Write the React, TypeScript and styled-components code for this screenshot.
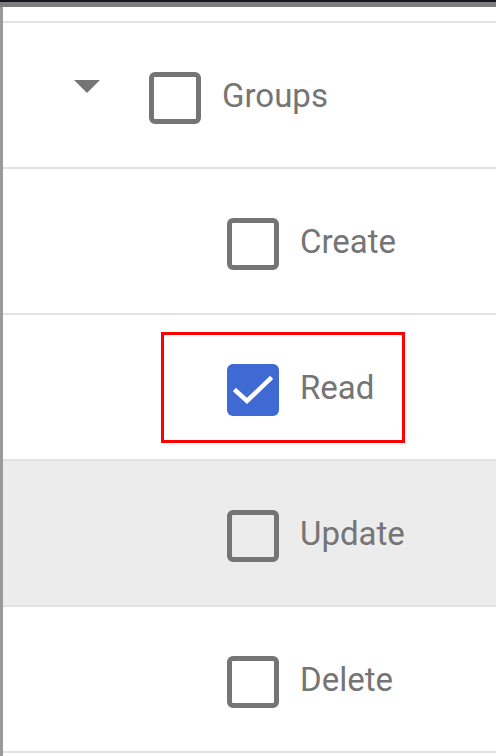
import React from "react";
import styled, { createGlobalStyle } from "styled-components";

const Global = createGlobalStyle`
  html, body { margin: 0; padding: 0; background: #ffffff; }
  body { font-family: Roboto, "Noto Sans", Arial, sans-serif; }
`;

const Frame = styled.div`
  width: 496px;
  height: 756px;
  box-sizing: border-box;
  border-top: 2px solid #15151f;
  overflow: hidden;
  background: #ffffff;
`;

const TopBand = styled.div`
  height: 5px;
  background: #7d7d7d;
`;

const Body = styled.div`
  border-left: 3px solid #9a9a9a;
  height: 100%;
  box-sizing: border-box;
  padding-top: 14px;
`;

const List = styled.div`
  border-top: 2px solid #e2e2e2;
  display: flex;
  flex-direction: column;
`;

const Row = styled.div<{ $indent: number; $shaded?: boolean }>`
  position: relative;
  height: 144px;
  border-bottom: 2px solid #e2e2e2;
  background: ${(p) => (p.$shaded ? "#ececec" : "#ffffff")};
  display: flex;
  align-items: center;
  padding-left: ${(p) => p.$indent}px;
`;

const Caret = styled.svg`
  width: 26px;
  height: 13px;
  margin-right: 49px;
  margin-bottom: 17px;
  flex: none;
`;

const Box = styled.div<{ $checked?: boolean }>`
  width: 52px;
  height: 52px;
  box-sizing: border-box;
  border-radius: 6px;
  border: ${(p) => (p.$checked ? "none" : "5px solid #757575")};
  background: ${(p) => (p.$checked ? "#3f69d3" : "transparent")};
  margin-top: 5px;
  flex: none;
  display: flex;
  align-items: center;
  justify-content: center;
`;

const Label = styled.span<{ $gap: number }>`
  margin-left: ${(p) => p.$gap}px;
  font-family: Roboto, "Noto Sans", Arial, sans-serif;
  font-size: 33px;
  color: #757575;
  line-height: 1;
`;

const Highlight = styled.div`
  position: absolute;
  left: 158px;
  top: 17px;
  width: 244px;
  height: 111px;
  box-sizing: border-box;
  border: 3px solid #ff0000;
  pointer-events: none;
`;

const Check = () => (
  <svg width="52" height="52" viewBox="0 0 52 52">
    <polyline
      points="9,27 20,37 43,15"
      fill="none"
      stroke="#ffffff"
      strokeWidth="4.5"
      strokeLinecap="square"
    />
  </svg>
);

const items = [
  { label: "Create", checked: false, shaded: false, highlight: false },
  { label: "Read", checked: true, shaded: false, highlight: true },
  { label: "Update", checked: false, shaded: true, highlight: false },
  { label: "Delete", checked: false, shaded: false, highlight: false },
];

export default function App() {
  return (
    <>
      <Global />
      <Frame>
        <TopBand />
        <Body>
          <List>
            <Row $indent={71}>
              <Caret viewBox="0 0 26 13">
                <polygon points="0,0 26,0 13,13" fill="#757575" />
              </Caret>
              <Box />
              <Label $gap={21}>Groups</Label>
            </Row>
            {items.map((it) => (
              <Row key={it.label} $indent={224} $shaded={it.shaded}>
                <Box $checked={it.checked}>{it.checked && <Check />}</Box>
                <Label $gap={21}>{it.label}</Label>
                {it.highlight && <Highlight />}
              </Row>
            ))}
          </List>
        </Body>
      </Frame>
    </>
  );
}
